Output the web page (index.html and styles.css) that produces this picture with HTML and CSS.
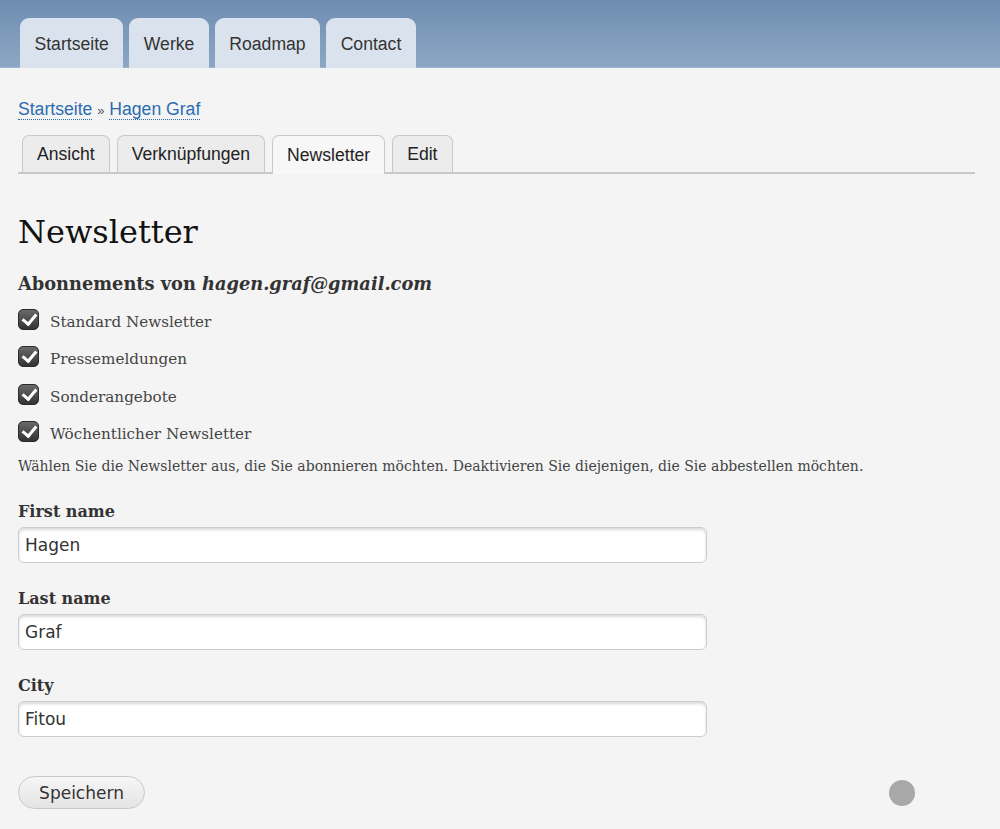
FILE: index.html
```html
<!DOCTYPE html>
<html lang="de">
  <head>
    <meta charset="UTF-8" />
    <title>Newsletter | Hagen Graf</title>
    <link rel="stylesheet" href="styles.css">
  </head>
  <body>
    <div class="header">
      <ul class="main-menu">
        <li><a href="#">Startseite</a></li>
        <li><a href="#">Werke</a></li>
        <li><a href="#">Roadmap</a></li>
        <li><a href="#">Contact</a></li>
      </ul>
    </div>

    <div class="main">
      <div class="breadcrumb">
        <a href="#">Startseite</a> <span class="sep">»</span> <a href="#">Hagen Graf</a>
      </div>

      <ul class="tabs">
        <li><a href="#">Ansicht</a></li>
        <li><a href="#">Verknüpfungen</a></li>
        <li class="active"><a href="#">Newsletter</a></li>
        <li><a href="#">Edit</a></li>
      </ul>

      <h1 class="page-title">Newsletter</h1>

      <form class="newsletter-form">
        <div class="subscriptions">
          <div class="subscriptions-title">Abonnements von <em>hagen.graf@gmail.com</em></div>
          <label class="check"><input type="checkbox" checked /><span class="box"></span>Standard Newsletter</label>
          <label class="check"><input type="checkbox" checked /><span class="box"></span>Pressemeldungen</label>
          <label class="check"><input type="checkbox" checked /><span class="box"></span>Sonderangebote</label>
          <label class="check"><input type="checkbox" checked /><span class="box"></span>Wöchentlicher Newsletter</label>
          <div class="description">Wählen Sie die Newsletter aus, die Sie abonnieren möchten. Deaktivieren Sie diejenigen, die Sie abbestellen möchten.</div>
        </div>

        <div class="form-item">
          <label for="first">First name</label>
          <input type="text" id="first" class="form-text" value="Hagen" />
        </div>
        <div class="form-item">
          <label for="last">Last name</label>
          <input type="text" id="last" class="form-text" value="Graf" />
        </div>
        <div class="form-item">
          <label for="city">City</label>
          <input type="text" id="city" class="form-text" value="Fitou" />
        </div>

        <div class="actions">
          <button type="button" class="form-submit">Speichern</button>
          <span class="dot"></span>
        </div>
      </form>
    </div>
  </body>
</html>
```

FILE: styles.css
```css
html {
  background: #f4f4f4;
}

body {
  margin: 0;
  background: #f4f4f4;
  color: #333;
  font-family: "DejaVu Serif", Georgia, serif;
}

a {
  text-decoration: none;
}

/* Kopfbereich mit Hauptmenü */
.header {
  height: 68px;
  background: linear-gradient(#6f8db0, #8ba7c5);
  border-bottom: 1px solid #9fb4cc;
  box-sizing: border-box;
  padding: 18px 0 0 20px;
}

.main-menu {
  list-style: none;
  margin: 0;
  padding: 0;
  display: flex;
  gap: 6px;
  height: 50px;
}

.main-menu li {
  background: #dae3ed;
  border-radius: 9px 9px 0 0;
  display: flex;
  align-items: center;
  padding-top: 2px;
}

.main-menu a {
  color: #333;
  font-family: "Liberation Sans", Arial, sans-serif;
  font-size: 17.6px;
  padding: 0 14.5px;
}

/* Inhalt */
.main {
  padding: 31px 25px 0 18px;
}

.breadcrumb {
  font-family: "Liberation Sans", Arial, sans-serif;
  font-size: 17.6px;
  height: 36px;
  color: #555;
}

.breadcrumb a {
  color: #2b6cb0;
  border-bottom: 1px dotted #2b6cb0;
}

.breadcrumb .sep {
  font-size: 13px;
}

.tabs {
  list-style: none;
  margin: 0;
  padding: 0 0 0 4px;
  display: flex;
  gap: 7px;
  border-bottom: 2px solid #c8c8c8;
  height: 37px;
}

.tabs li {
  background: #ececec;
  border: 1px solid #c8c8c8;
  border-bottom: none;
  border-radius: 7px 7px 0 0;
  display: flex;
  align-items: center;
}

.tabs li.active {
  background: #f7f7f7;
  margin-bottom: -2px;
}

.tabs a {
  color: #222;
  font-family: "Liberation Sans", Arial, sans-serif;
  font-size: 17.6px;
  padding: 0 14px;
}

.page-title {
  font-size: 32px;
  font-weight: normal;
  color: #111;
  margin: 37px 0 20px;
  line-height: 42px;
}

.subscriptions-title {
  font-size: 17.8px;
  font-weight: bold;
  margin-bottom: 9px;
}

.check {
  display: flex;
  align-items: center;
  gap: 11px;
  font-size: 15.2px;
  height: 37.5px;
  color: #444;
}

.check input {
  display: none;
}

.box {
  width: 21px;
  height: 21px;
  border-radius: 5px;
  background: linear-gradient(#6a6a6a, #333);
  border: 1px solid #2a2a2a;
  box-sizing: border-box;
  position: relative;
  margin-top: -5px;
}

.box::after {
  content: "";
  position: absolute;
  left: 6px;
  top: 1px;
  width: 6px;
  height: 11px;
  border: solid #fff;
  border-width: 0 3px 3px 0;
  transform: rotate(40deg);
}

.description {
  font-size: 14px;
  color: #444;
  margin: 5px 0 28px;
}

.form-item {
  margin-bottom: 26px;
}

.form-item label {
  display: block;
  font-size: 16px;
  font-weight: bold;
  margin-bottom: 6px;
}

.form-text {
  width: 689px;
  height: 36px;
  box-sizing: border-box;
  border: 1px solid #ccc;
  border-radius: 6px;
  background: #fff;
  box-shadow: inset 0 2px 3px rgba(0, 0, 0, 0.15);
  font-family: "DejaVu Sans", Verdana, sans-serif;
  font-size: 17px;
  color: #333;
  padding: 0 6px;
}

.actions {
  display: flex;
  align-items: center;
  justify-content: space-between;
  width: 897px;
  margin-top: 39px;
}

.form-submit {
  width: 127px;
  height: 33px;
  border: 1px solid #c8c8c8;
  border-radius: 17px;
  background: linear-gradient(#f6f6f6, #e4e4e4);
  font-family: "DejaVu Sans", Verdana, sans-serif;
  font-size: 17px;
  color: #333;
}

.dot {
  width: 26px;
  height: 26px;
  border-radius: 50%;
  background: #a8a8a8;
}
```
